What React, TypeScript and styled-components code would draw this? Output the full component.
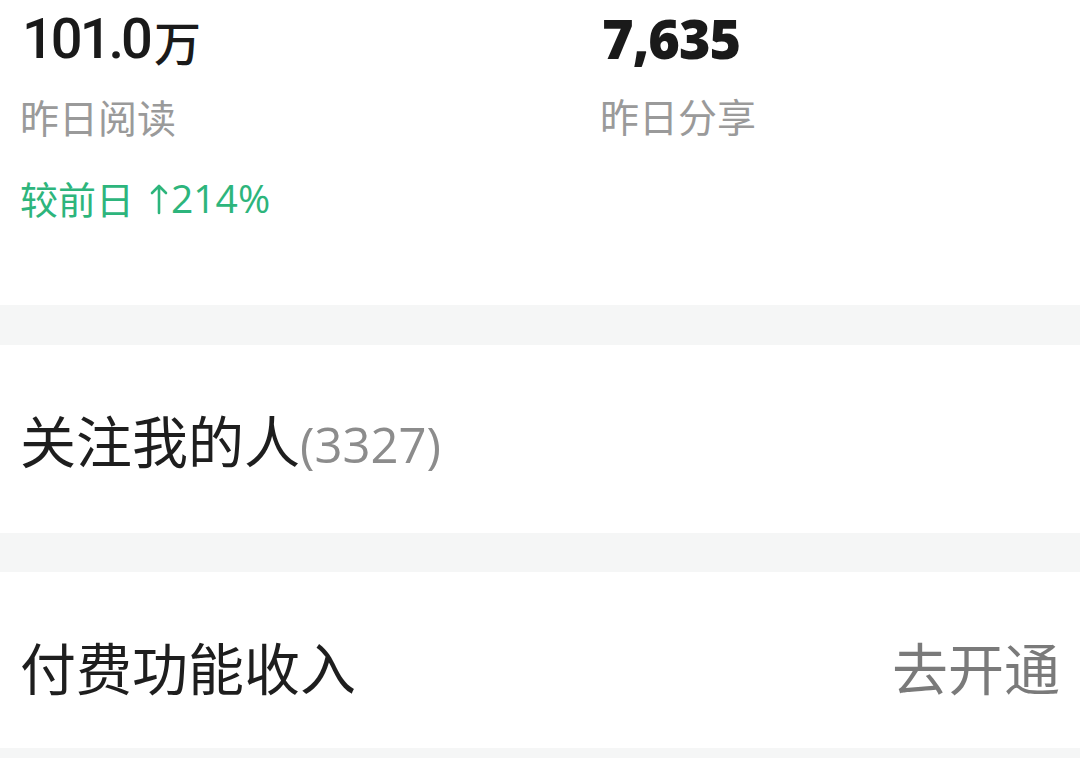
import { createGlobalStyle } from 'styled-components';
import styled from 'styled-components';

const GlobalStyle = createGlobalStyle`
	html, body {
		margin: 0;
		padding: 0;
		background: #ffffff;
	}
	body {
		font-family: "Noto Sans CJK SC", "Noto Sans", sans-serif;
		color: #1c1c1c;
	}
`;

const Page = styled.div`
	display: flex;
	flex-direction: column;
	width: 1080px;
	height: 758px;
	overflow: hidden;
	background: #ffffff;
`;

const Stats = styled.section`
	display: grid;
	grid-template-columns: 580px 1fr;
	height: 305px;
	padding: 2px 0 0 20px;
	box-sizing: border-box;
`;

const Stat = styled.div`
	display: flex;
	flex-direction: column;
`;

const Value = styled.div<{ $heavy?: boolean }>`
	display: flex;
	align-items: baseline;
	font-family: ${p => (p.$heavy ? '"Open Sans"' : 'Roboto')}, "Noto Sans CJK SC", sans-serif;
	font-size: ${p => (p.$heavy ? 54 : 56)}px;
	line-height: 72px;
	font-weight: ${p => (p.$heavy ? 800 : 500)};
	color: #1a1a1a;
	letter-spacing: ${p => (p.$heavy ? -1 : -3)}px;
	padding-left: 2px;
`;

const Unit = styled.span`
	font-family: "Noto Sans CJK SC", sans-serif;
	font-size: 47px;
	font-weight: 500;
	letter-spacing: 0;
	margin-left: 4px;
	position: relative;
	top: 3px;
`;

const Label = styled.div`
	margin-top: 19px;
	font-size: 39px;
	line-height: 44px;
	color: #9a9a9a;
`;

const Trend = styled.div`
	margin-top: 38px;
	font-size: 38px;
	line-height: 44px;
	color: #2db57c;
	display: flex;
	align-items: center;
	gap: 16px;
`;

const Percent = styled.span`
	display: flex;
	align-items: center;
	gap: 3px;
	font-family: "Open Sans", sans-serif;
	font-size: 39px;
`;

const Arrow = styled.svg`
	width: 18px;
	height: 32px;
	margin-top: 2px;
`;

const Band = styled.div<{ $h: number }>`
	height: ${p => p.$h}px;
	background: #f5f6f6;
	flex-shrink: 0;
`;

const Row = styled.div<{ $h: number; $shift?: number }>`
	display: flex;
	align-items: center;
	justify-content: space-between;
	height: ${p => p.$h}px;
	padding: ${p => p.$shift || 0}px 20px 0 20px;
	box-sizing: border-box;
	flex-shrink: 0;
`;

const RowTitle = styled.div`
	font-size: 56px;
	line-height: 64px;
	color: #1e1e1e;
	display: flex;
	align-items: baseline;
`;

const Count = styled.span`
	font-family: "Open Sans", sans-serif;
	font-size: 49px;
	color: #8c8c8c;
`;

const Action = styled.div`
	font-size: 56px;
	line-height: 64px;
	color: #7a7a7a;
`;

export default function App() {
	return (
		<Page>
			<GlobalStyle />
			<Stats>
				<Stat>
					<Value>
						101.0<Unit>万</Unit>
					</Value>
					<Label>昨日阅读</Label>
					<Trend>
						<span>较前日</span>
						<Percent>
							<Arrow viewBox="0 0 18 32" fill="none" stroke="currentColor" strokeWidth="2.6" strokeLinecap="round" strokeLinejoin="round">
								<path d="M9 30V3M2 10l7-7 7 7" />
							</Arrow>
							214%
						</Percent>
					</Trend>
				</Stat>
				<Stat>
					<Value $heavy>7,635</Value>
					<Label>昨日分享</Label>
				</Stat>
			</Stats>
			<Band $h={40} />
			<Row $h={188} $shift={4}>
				<RowTitle>
					关注我的人<Count>(3327)</Count>
				</RowTitle>
			</Row>
			<Band $h={39} />
			<Row $h={176} $shift={12}>
				<RowTitle>付费功能收入</RowTitle>
				<Action>去开通</Action>
			</Row>
			<Band $h={10} />
		</Page>
	);
}
